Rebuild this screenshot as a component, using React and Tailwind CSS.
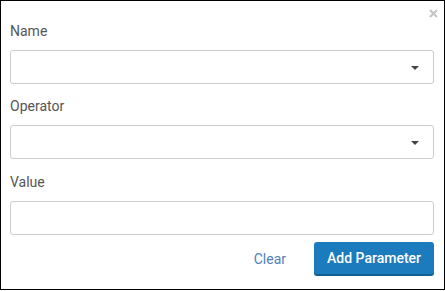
import { useState } from 'react';

const Caret = () => (
  <svg width="8" height="4" viewBox="0 0 8 4" className="absolute right-[14px] top-[15px]">
    <path d="M0 0 L8 0 L4 4 Z" fill="#444" />
  </svg>
);

const SelectField = ({ label }) => (
  <div>
    <label className="block h-5 leading-5 mb-[9px] text-[14px] text-[#555]">{label}</label>
    <div className="relative h-[34px] rounded-[3px] border border-[#ccc] bg-white">
      <Caret />
    </div>
  </div>
);

export default function App() {
  const [value, setValue] = useState('');

  return (
    <div
      className="relative w-[445px] h-[290px] border border-black bg-white"
      style={{ fontFamily: 'Roboto, "Liberation Sans", sans-serif' }}
    >
      <button className="absolute right-[6px] top-[7px] w-[10px] h-[10px] flex items-center justify-center">
        <svg width="9" height="9" viewBox="0 0 9 9">
          <path d="M1 1 L8 8 M8 1 L1 8" stroke="#c4c4c4" strokeWidth="2" />
        </svg>
      </button>

      <div className="pl-[9px] pr-[10px] pt-[20px] flex flex-col">
        <SelectField label="Name" />
        <div className="mt-[12px]">
          <SelectField label="Operator" />
        </div>
        <div className="mt-[13px]">
          <label className="block h-5 leading-5 mb-[9px] text-[14px] text-[#555]">Value</label>
          <input
            value={value}
            onChange={(e) => setValue(e.target.value)}
            className="block w-full h-[34px] rounded-[3px] border border-[#ccc] bg-white px-2 text-[14px] outline-none"
          />
        </div>
        <div className="mt-[7px] flex items-center justify-end gap-[28px]">
          <button className="text-[14px] text-[#4f80bd]">Clear</button>
          <button className="h-[34px] px-[13px] rounded-[3px] bg-[#1c7bbd] border-b-2 border-[#125e92] text-white text-[14px] font-medium">
            Add Parameter
          </button>
        </div>
      </div>
    </div>
  );
}
